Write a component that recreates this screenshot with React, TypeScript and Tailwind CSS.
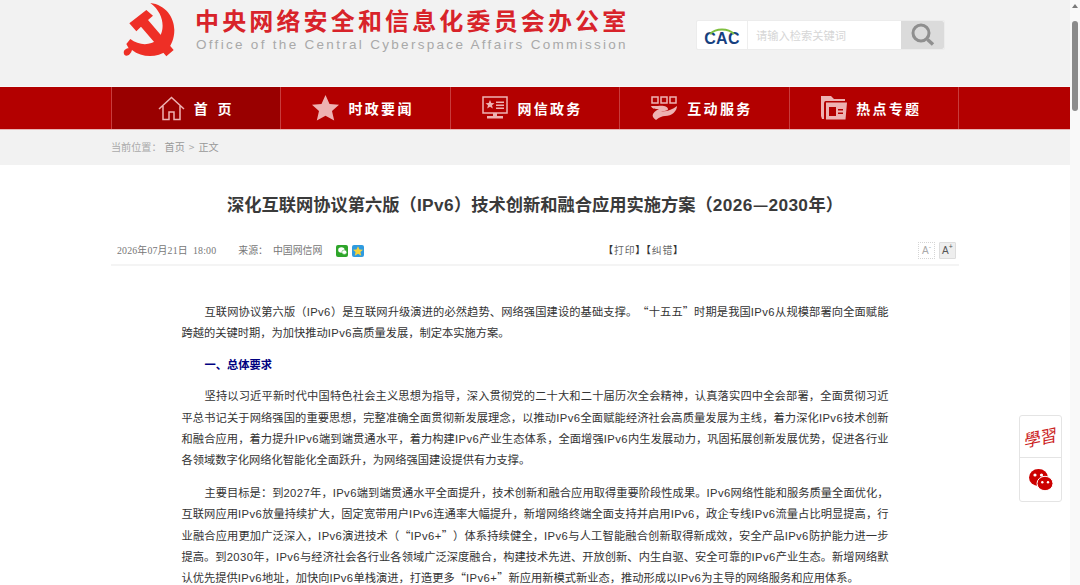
import React from "react";

const sans = "font-['Noto_Sans_CJK_SC','Liberation_Sans',sans-serif]";

function Mixed({ text }: { text: string }) {
  const parts = text.split(/([A-Za-z0-9+]+)/);
  return (
    <>
      {parts.map((p, i) =>
        i % 2 === 1 ? (
          <span key={i} className="font-['Liberation_Sans',sans-serif] leading-none tracking-[0.4px]">{p}</span>
        ) : (
          <React.Fragment key={i}>{p}</React.Fragment>
        )
      )}
    </>
  );
}

function Emblem() {
  return (
    <svg width="52" height="55" viewBox="68 4 156 165" className="shrink-0">
      <g fill="#ee2f26">
        <path d="M150 7 C195 12 222 50 222 88 C222 115 212 135 200 150 C170 172 125 172 95 148 C92 160 80 170 72 162 C66 152 76 143 85 143 L78 130 L90 115 C115 135 150 135 170 118 C195 95 195 40 150 7 Z" />
        <path d="M87 68 L138 28 L158 45 L143 58 L220 148 L198 167 L122 78 L108 92 Z" />
      </g>
    </svg>
  );
}

function HomeIcon() {
  return (
    <svg width="27" height="25" viewBox="0 0 27 25" fill="none" stroke="#eeb2b2" strokeWidth="1.5">
      <path d="M1 13 L13.5 1.5 L26 13 M5 10 V23.5 H11 V16 H16 V23.5 H22 V10" />
    </svg>
  );
}
function StarIcon() {
  return (
    <svg width="27" height="26" viewBox="0 0 27 26">
      <path fill="#eeb2b2" d="M13.5 0 L17.5 9 L27 9.8 L20 16 L22.2 25.5 L13.5 20.7 L4.8 25.5 L7 16 L0 9.8 L9.5 9 Z" />
    </svg>
  );
}
function ScreenIcon() {
  return (
    <svg width="26" height="24" viewBox="0 0 26 24">
      <path fill="none" stroke="#eeb2b2" strokeWidth="1.5" d="M1 1 H25 V17 H1 Z" />
      <path fill="#eeb2b2" d="M8 4 L9.3 7 L12.5 7.2 L10 9.3 L10.8 12.4 L8 10.7 L5.2 12.4 L6 9.3 L3.5 7.2 L6.7 7 Z" />
      <path fill="#eeb2b2" d="M14 5.5 H22 V7 H14 Z M14 8.5 H22 V10 H14 Z M14 11.5 H22 V13 H14 Z M11 17 H15 V20 H11 Z M5 20 H21 V22.5 H5 Z" />
    </svg>
  );
}
function HandIcon() {
  return (
    <svg width="27" height="24" viewBox="0 0 27 24">
      <g fill="none" stroke="#eeb2b2" strokeWidth="1.5">
        <rect x="1" y="1" width="6" height="6" />
        <rect x="10" y="1" width="6" height="6" />
        <rect x="19" y="1" width="6" height="6" />
      </g>
      <path fill="#eeb2b2" d="M0 10 H7 C13 9 17 11 17 13 C17 15 13 15 10 15 C15 16 21 14 26 10 C26 15 21 20 14 20 C11 20 9 21 5 24 C2 22 1 20 2 18 C4 15 6 14 8 13 C4 13 1 13 0 10 Z" />
    </svg>
  );
}
function FolderIcon() {
  return (
    <svg width="26" height="24" viewBox="0 0 26 24">
      <path fill="#eeb2b2" d="M0 0 H10 L13 3 H24 V5 H5 C3 5 3 7 3 9 V23 H1 L0 20 Z" />
      <path fill="#eeb2b2" fillRule="evenodd" d="M5 6.5 H26 L24.5 23.5 H5 Z M8 11 V20 H15 V11 Z M17 13 V14.5 H22 V13 Z M17 16.5 V18 H22 V16.5 Z" />
    </svg>
  );
}
function SearchIcon() {
  return (
    <svg width="24" height="24" viewBox="0 0 24 24" fill="none" stroke="#8f8f8f">
      <circle cx="10" cy="10" r="8" strokeWidth="3" />
      <path d="M16.5 16.5 L22 21.5" strokeWidth="3.5" />
    </svg>
  );
}
function WechatRed() {
  return (
    <svg width="24" height="22" viewBox="0 0 24 22">
      <ellipse cx="9.5" cy="8.5" rx="9.5" ry="8.5" fill="#cc0000" />
      <ellipse cx="16" cy="14.5" rx="8" ry="7.2" fill="#cc0000" stroke="#fff" strokeWidth="1" />
      <circle cx="6" cy="6" r="1.6" fill="#fff" />
      <circle cx="12.5" cy="6" r="1.6" fill="#fff" />
      <circle cx="13.3" cy="13.3" r="1.2" fill="#fff" />
      <circle cx="19" cy="13.3" r="1.2" fill="#fff" />
    </svg>
  );
}

const navItems = [
  { icon: <HomeIcon />, label: "首 页", active: true, cls: "tracking-[3.3px]" },
  { icon: <StarIcon />, label: "时政要闻" },
  { icon: <ScreenIcon />, label: "网信政务" },
  { icon: <HandIcon />, label: "互动服务" },
  { icon: <FolderIcon />, label: "热点专题" },
];

const paras = [
  "互联网协议第六版（IPv6）是互联网升级演进的必然趋势、网络强国建设的基础支撑。“十五五”时期是我国IPv6从规模部署向全面赋能跨越的关键时期，为加快推动IPv6高质量发展，制定本实施方案。",
  "坚持以习近平新时代中国特色社会主义思想为指导，深入贯彻党的二十大和二十届历次全会精神，认真落实四中全会部署，全面贯彻习近平总书记关于网络强国的重要思想，完整准确全面贯彻新发展理念，以推动IPv6全面赋能经济社会高质量发展为主线，着力深化IPv6技术创新和融合应用，着力提升IPv6端到端贯通水平，着力构建IPv6产业生态体系，全面增强IPv6内生发展动力，巩固拓展创新发展优势，促进各行业各领域数字化网络化智能化全面跃升，为网络强国建设提供有力支撑。",
  "主要目标是：到2027年，IPv6端到端贯通水平全面提升，技术创新和融合应用取得重要阶段性成果。IPv6网络性能和服务质量全面优化，互联网应用IPv6放量持续扩大，固定宽带用户IPv6连通率大幅提升，新增网络终端全面支持并启用IPv6，政企专线IPv6流量占比明显提高，行业融合应用更加广泛深入，IPv6演进技术（“IPv6+”）体系持续健全，IPv6与人工智能融合创新取得新成效，安全产品IPv6防护能力进一步提高。到2030年，IPv6与经济社会各行业各领域广泛深度融合，构建技术先进、开放创新、内生自驱、安全可靠的IPv6产业生态。新增网络默认优先提供IPv6地址，加快向IPv6单栈演进，打造更多“IPv6+”新应用新模式新业态，推动形成以IPv6为主导的网络服务和应用体系。",
];

export default function App() {
  return (
    <div className={`relative flex h-[585px] w-[1080px] overflow-hidden bg-white ${sans}`}>
      <div className="w-[1070px] shrink-0 overflow-hidden">
        <header className="h-[87px] border-b border-[#f8f8f8] bg-[#f2f2f2]">
          <div className="mx-auto flex w-[848px] items-start">
            <div className="ml-[12px] mt-[2px]"><Emblem /></div>
            <div className="ml-[20px] w-[440px]">
              <div className="mt-[5px] whitespace-nowrap text-[24px] leading-[30px] font-bold tracking-[3.15px] text-[#d8232a]">中央网络安全和信息化委员会办公室</div>
              <div className="mt-[1px] whitespace-nowrap pl-[1px] font-['Liberation_Sans',sans-serif] text-[13.5px] leading-[17px] tracking-[2.3px] text-[#a9a9a9]">Office of the Central Cyberspace Affairs Commission</div>
            </div>
            <div className="ml-[61px] mt-[20px] flex h-[30px] w-[249px] rounded-[2px] border border-[#ececec] bg-white">
              <div className="relative flex w-[51px] items-end justify-center border-r border-[#eeeeee]">
                <svg width="30" height="8" viewBox="0 0 30 8" className="absolute left-[10px] top-[6px]">
                  <path d="M3 7 C9 1 21 1 27 7" fill="none" stroke="#7fbf3f" strokeWidth="2" />
                </svg>
                <span className="font-['Liberation_Sans',sans-serif] text-[16px] leading-[21px] font-bold tracking-[0.3px] text-[#16407f]">CAC</span>
              </div>
              <div className="flex-1 pl-[8px] text-[11.25px] leading-[28px] text-[#d6d6d6]">请输入检索关键词</div>
              <div className="flex w-[43px] items-center justify-center rounded-r-[2px] bg-[#dbdbdb]"><SearchIcon /></div>
            </div>
          </div>
        </header>

        <nav className="h-[43px] border-b border-[#e8b5b5] bg-[#b30000]">
          <div className="mx-auto grid h-full w-[848px] grid-cols-5 border-l border-[#c83c3c]">
            {navItems.map((n) => (
              <div key={n.label} className={`flex h-full items-center justify-center gap-[9px] border-r border-[#c83c3c] ${n.active ? "bg-[#990000]" : "pr-[5px]"}`}>
                {n.icon}
                <span className={`text-[14px] leading-[20px] font-bold whitespace-pre text-white ${n.cls ?? "tracking-[2.3px]"}`}>{n.label}</span>
              </div>
            ))}
          </div>
        </nav>

        <div className="h-[35px] bg-[#f2f2f2]">
          <div className="mx-auto flex w-[848px] items-center text-[10.125px] leading-[33px] text-[#aaaaaa]">
            <span>当前位置：</span>
            <span className="ml-[3px] text-[#999999]">首页</span>
            <span className="mx-[4px]">&gt;</span>
            <span className="text-[#999999]">正文</span>
          </div>
        </div>

        <main className="mx-auto w-[848px]">
          <h1 className="mt-[26px] text-center text-[17.25px] leading-[26px] font-bold text-[#3a3a3a]"><Mixed text="深化互联网协议第六版（IPv6）技术创新和融合应用实施方案（2026—2030年）" /></h1>

          <div className="mt-[22px] flex h-[27px] items-center border-b-2 border-[#f4f4f4] pb-[1px] font-['Liberation_Serif','Noto_Sans_CJK_SC',serif] text-[9.9px] text-[#777777]">
            <span className="ml-[6px] whitespace-pre tracking-[0.15px]">2026年07月21日  18:00</span>
            <span className="ml-[22px]">来源：</span>
            <span className="ml-[5px]">中国网信网</span>
            <span className="ml-[14px] flex h-[12px] w-[12px] items-center justify-center rounded-[2px] bg-[#2ea52a]">
              <svg width="9" height="8" viewBox="0 0 9 8"><ellipse cx="3.4" cy="3" rx="3.2" ry="2.7" fill="#fff" /><ellipse cx="6.3" cy="5.2" rx="2.5" ry="2.2" fill="#fff" stroke="#2ea52a" strokeWidth=".5" /></svg>
            </span>
            <span className="ml-[4px] flex h-[12px] w-[12px] items-center justify-center rounded-[2px] bg-[#2f9be0]">
              <svg width="10" height="10" viewBox="0 0 27 26"><path fill="#f7d23a" d="M13.5 0 L17.5 9 L27 9.8 L20 16 L22.2 25.5 L13.5 20.7 L4.8 25.5 L7 16 L0 9.8 L9.5 9 Z" /></svg>
            </span>
            <span className="ml-[239px] whitespace-nowrap tracking-[0.8px] text-[#666666]"><b className="text-[#333333]">【</b>打印<b className="text-[#333333]">】【</b>纠错<b className="text-[#333333]">】</b></span>
            <div className="ml-auto mr-[3px] -mt-[2px] flex gap-[4px] font-['Liberation_Sans',sans-serif]">
              <span className="flex h-[17px] w-[17px] items-center justify-center border border-dotted border-[#d5d5d5] text-[10px] text-[#aaaaaa]">A<sup className="text-[7px]">-</sup></span>
              <span className="flex h-[17px] w-[17px] items-center justify-center rounded-[1px] border border-[#dddddd] bg-[#eeeeee] text-[10px] text-[#555555]">A<sup className="text-[7px]">+</sup></span>
            </div>
          </div>

          <article className="mx-auto mt-[35px] w-[707px] text-justify text-[11.25px] leading-[21.4px] text-[#333333] [text-spacing-trim:space-all]">
            <p className="indent-[23px]"><Mixed text={paras[0]} /></p>
            <p className="mt-[10px] indent-[23px] font-bold text-[#000080]">一、总体要求</p>
            <p className="mt-[10px] indent-[23px]"><Mixed text={paras[1]} /></p>
            <p className="mt-[11px] indent-[23px]"><Mixed text={paras[2]} /></p>
          </article>
        </main>
      </div>

      <div className="flex w-[10px] shrink-0 flex-col items-center bg-[#f9f9f9] pt-[4px]">
        <div className="h-0 w-0 border-x-[3px] border-b-[4px] border-x-transparent border-b-[#7a7a7a]" />
        <div className="mt-[13px] h-[90px] w-[6px] rounded-[3px] bg-[#8c8c8c]" />
      </div>

      <aside className="absolute left-[1019px] top-[415px] flex w-[43px] flex-col rounded-[3px] border border-[#e4e4e4] bg-white">
        <div className="flex h-[42px] items-center justify-center border-b border-[#e4e4e4]">
          <span className="-skew-x-12 -rotate-12 text-[17px] leading-none font-normal tracking-[-0.5px] text-[#cc1f1f]">學習</span>
        </div>
        <div className="flex h-[43px] items-center justify-center"><WechatRed /></div>
      </aside>
    </div>
  );
}
